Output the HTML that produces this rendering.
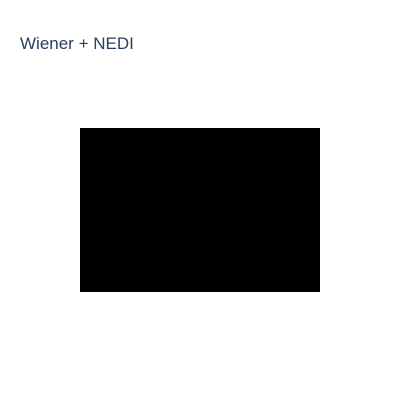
<!DOCTYPE html>
<html><head><style>
html,body{margin:0;padding:0;width:400px;height:400px;background:#fff;overflow:hidden}
.t{position:absolute;left:20px;top:34px;font-family:"Liberation Sans","DejaVu Sans",sans-serif;font-size:17px;color:#2a3f5f}
.b{position:absolute;left:80px;top:128px;width:240px;height:164px;background:#000}
</style></head><body>
<div class="t">Wiener + NEDI</div>
<div class="b"></div>
</body></html>
